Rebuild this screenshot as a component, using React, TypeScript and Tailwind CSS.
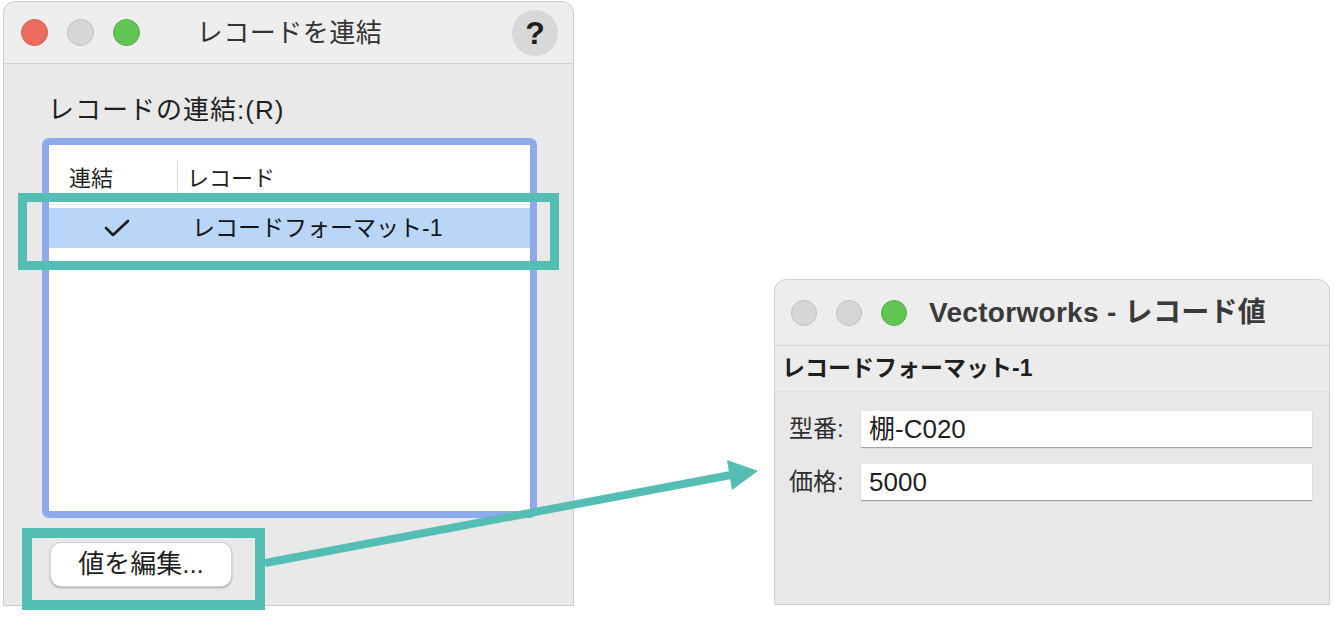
import React from 'react';

const FONT = "font-['Liberation_Sans','Noto_Sans_CJK_JP',sans-serif]";

// macの信号ボタン
function Light({ className }: { className: string }) {
  return <span className={`block rounded-full border ${className}`} />;
}

function CheckMark() {
  return (
    <svg width="26" height="18" viewBox="0 0 26 18" className="shrink-0">
      <polyline points="2,9 9,16 24,2" fill="none" stroke="#1a1a1a" strokeWidth="2.6" strokeLinecap="round" strokeLinejoin="round" />
    </svg>
  );
}

function LinkRecordWindow() {
  return (
    <div className="ml-[3px] mt-[1px] flex h-[605px] w-[571px] shrink-0 flex-col rounded-t-[12px] border border-[#cbcbcb] bg-[#e9e9e9]">
      <div className="grid h-[62px] grid-cols-[1fr_auto_1fr] items-center rounded-t-[12px] border-b border-[#d2d2d2] bg-[#eeeeee] pl-[17px] pr-[15px]">
        <div className="flex items-center gap-[19px]">
          <Light className="h-[27px] w-[27px] border-[#d95a4f] bg-[#ed6a5e]" />
          <Light className="h-[27px] w-[27px] border-[#bfbfbf] bg-[#d6d6d6]" />
          <Light className="h-[27px] w-[27px] border-[#4fae44] bg-[#61c554]" />
        </div>
        <h1 className="text-[26px] leading-[32px] tracking-[0.5px] text-[#333333]">レコードを連結</h1>
        <div className="flex justify-end">
          <button className="flex h-[46px] w-[46px] items-center justify-center rounded-full bg-[#d8d8d8] text-[32px] font-bold text-[#1f1f1f]">
            ?
          </button>
        </div>
      </div>

      <div className="flex flex-col px-[38px] pt-[30px]">
        <p className="ml-[6px] text-[26px] leading-[32px] tracking-[1px] text-[#1f1f1f]">レコードの連結:(R)</p>

        <div className="mt-[12px] h-[380px] w-[495px] rounded-[7px] border-[7px] border-[#8dabeb] bg-white">
          <div className="flex h-[60px] items-center border-b border-[#ececec] pt-[8px] text-[22px] text-[#1f1f1f]">
            <span className="w-[128px] pl-[20px]">連結</span>
            <span className="h-[38px] w-px bg-[#dcdcdc]" />
            <span className="pl-[9px]">レコード</span>
          </div>
          <div className="mt-[3px] flex h-[40px] items-center bg-[#b9d5f8] text-[23px] text-[#141414]">
            <span className="ml-[55px]">
              <CheckMark />
            </span>
            <span className="ml-[62px]">レコードフォーマット-1</span>
          </div>
        </div>

        <button className="ml-[8px] mt-[24px] flex h-[45px] w-[182px] items-center justify-center rounded-[11px] border-[0.5px] border-[#d4d4d4] bg-white text-[26px] text-[#1f1f1f] shadow-[0_1px_2px_rgba(0,0,0,0.3)]">
          値を編集...
        </button>
      </div>
    </div>
  );
}

function RecordValueWindow() {
  const fields = [
    { label: '型番:', value: '棚-C020' },
    { label: '価格:', value: '5000' },
  ];

  return (
    <div className="ml-[200px] mt-[279px] flex h-[326px] w-[556px] shrink-0 flex-col rounded-t-[12px] border border-[#d0d0d0] bg-[#e8e8e8]">
      <div className="flex h-[66px] items-center rounded-t-[12px] border-b border-[#d4d4d4] bg-[#ededed] pl-[16px]">
        <div className="flex items-center gap-[19px]">
          <Light className="h-[26px] w-[26px] border-[#bfbfbf] bg-[#d6d6d6]" />
          <Light className="h-[26px] w-[26px] border-[#bfbfbf] bg-[#d6d6d6]" />
          <Light className="h-[26px] w-[26px] border-[#4fae44] bg-[#61c554]" />
        </div>
        <h2 className="ml-[22px] text-[28px] font-bold leading-[32px] tracking-[0.3px] text-[#3a3a3a]">Vectorworks - レコード値</h2>
      </div>

      <div className="flex h-[46px] items-center border-b border-[#e2e2e2] bg-[#ebebeb] pl-[7px] text-[23px] font-bold text-[#1f1f1f]">
        レコードフォーマット-1
      </div>

      <div className="flex flex-col gap-[17px] pt-[19px]">
        {fields.map(f => (
          <div key={f.label} className="flex items-center">
            <span className="w-[86px] pl-[14px] text-[24px] text-[#2e2e2e]">{f.label}</span>
            <div className="flex h-[36px] w-[451px] items-center bg-white pl-[8px] text-[26px] text-[#1f1f1f] shadow-[0_1px_1px_rgba(0,0,0,0.3)]">
              {f.value}
            </div>
          </div>
        ))}
      </div>
    </div>
  );
}

// 注釈の枠と矢印
function Annotations() {
  return (
    <div className="pointer-events-none absolute inset-0">
      <div className="absolute left-[18px] top-[193px] h-[77px] w-[541px] border-[9px] border-[#55beb4]" />
      <div className="absolute left-[22px] top-[528px] h-[82px] w-[243px] border-[10px] border-[#55beb4]" />
      <svg className="absolute left-0 top-0" width="1334" height="618">
        <line x1="265" y1="563" x2="736" y2="474" stroke="#55beb4" strokeWidth="8" />
        <polygon points="727,460 758,471 732,490" fill="#55beb4" />
      </svg>
    </div>
  );
}

export default function App() {
  return (
    <div className={`relative flex h-[618px] w-[1334px] items-start overflow-hidden bg-white ${FONT}`}>
      <LinkRecordWindow />
      <RecordValueWindow />
      <Annotations />
    </div>
  );
}
